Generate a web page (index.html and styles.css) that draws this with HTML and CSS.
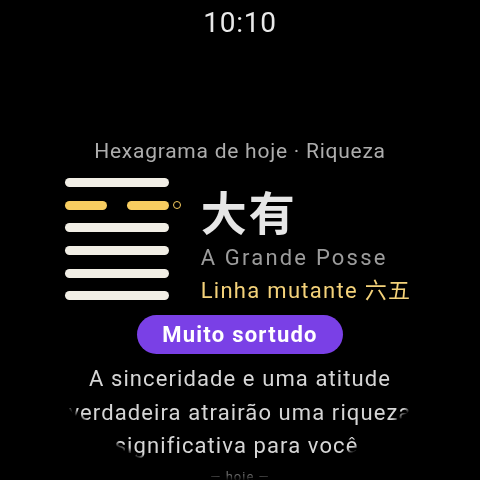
FILE: index.html
```html
<!DOCTYPE html>
<html lang="pt">
<head>
<meta charset="UTF-8" />
<meta name="viewport" content="width=device-width, initial-scale=1" />
<title>Hexagrama de hoje</title>
<link rel="stylesheet" href="styles.css">
</head>
<body>

<div class="watch">
  <div class="clock">10:10</div>

  <div class="subtitle">Hexagrama de hoje · Riqueza</div>

  <div class="reading">
    <!-- lines drawn top to bottom -->
    <div class="hexagram">
      <div class="line"><span class="bar"></span><span class="mark"></span></div>
      <div class="line changing"><span class="bar half"></span><span class="bar half"></span><span class="mark ring"></span></div>
      <div class="line"><span class="bar"></span><span class="mark"></span></div>
      <div class="line"><span class="bar"></span><span class="mark"></span></div>
      <div class="line"><span class="bar"></span><span class="mark"></span></div>
      <div class="line"><span class="bar"></span><span class="mark"></span></div>
    </div>

    <div class="names">
      <div class="name-cn">大有</div>
      <div class="name-pt">A Grande Posse</div>
      <div class="changing-line">Linha mutante 六五</div>
    </div>
  </div>

  <div class="luck">Muito sortudo</div>

  <p class="advice">A sinceridade e uma atitude verdadeira atrairão uma riqueza significativa para você.</p>

  <div class="footer">— hoje —</div>
</div>

</body>
</html>
```

FILE: styles.css
```css
body {
  margin: 0;
  background: #000;
}

/* Round watch screen */
.watch {
  width: 480px;
  height: 480px;
  overflow: hidden;
  background: #000;
  font-family: Roboto, "Noto Sans CJK SC", sans-serif;
  display: flex;
  flex-direction: column;
  align-items: center;
  -webkit-mask-image: radial-gradient(circle 240px at 50% 50%, #000 235px, transparent 241px);
  mask-image: radial-gradient(circle 240px at 50% 50%, #000 235px, transparent 241px);
}

.watch > * {
  flex-shrink: 0;
}

.clock {
  margin-top: 9px;
  font-size: 28px;
  line-height: 28px;
  color: #e9e9e9;
  letter-spacing: 0.8px;
}

.subtitle {
  margin-top: 104px;
  font-size: 21px;
  line-height: 21px;
  letter-spacing: 0.75px;
  color: #adadad;
}

/* Hexagram + names */
.reading {
  margin-top: 16px;
  display: flex;
  align-items: flex-start;
  gap: 20px;
  margin-left: -4px;
}

.hexagram {
  display: flex;
  flex-direction: column;
  gap: 13.7px;
}

.line {
  display: flex;
  align-items: center;
  gap: 4px;
}

.bar {
  width: 104px;
  height: 9px;
  border-radius: 5px;
  background: #f1eee5;
}

.line.changing {
  gap: 0;
}

.bar.half {
  width: 42px;
  background: #f8cd60;
}

.bar.half + .bar.half {
  margin-left: 20px;
  margin-right: 4px;
}

.mark {
  width: 8px;
  height: 8px;
  box-sizing: border-box;
}

.mark.ring {
  border: 1.6px solid #f8cd60;
  border-radius: 50%;
}

.names {
  display: flex;
  flex-direction: column;
}

.name-cn {
  font-family: "Noto Sans CJK SC", sans-serif;
  font-weight: 700;
  font-size: 46px;
  line-height: 64px;
  letter-spacing: 2px;
  color: #e6e6e6;
}

.name-pt {
  font-size: 22px;
  line-height: 32px;
  letter-spacing: 2.2px;
  color: #9c9c9c;
}

.changing-line {
  margin-top: 2px;
  font-size: 22px;
  line-height: 30px;
  letter-spacing: 1.3px;
  color: #f4d27a;
}

/* Fortune pill */
.luck {
  margin-top: 9px;
  width: 206px;
  height: 39px;
  border-radius: 20px;
  background: #7a40e6;
  color: #fff;
  font-weight: 700;
  font-size: 22px;
  letter-spacing: 1.25px;
  display: flex;
  align-items: center;
  justify-content: center;
}

.advice {
  margin: 8px 0 0;
  width: 420px;
  text-align: center;
  font-size: 22px;
  line-height: 33.5px;
  letter-spacing: 1.1px;
  color: #d6d6d6;
}

.footer {
  margin-top: 6px;
  font-size: 13px;
  letter-spacing: 1px;
  color: #6a6a6a;
}
```
